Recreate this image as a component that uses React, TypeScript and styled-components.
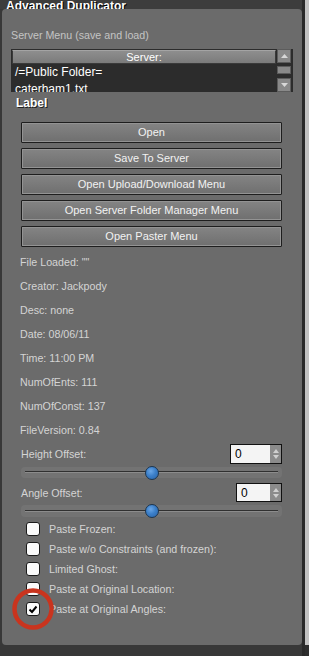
import React from 'react'
import styled, { createGlobalStyle } from 'styled-components'

const GlobalStyle = createGlobalStyle`
  html, body {
    margin: 0;
    padding: 0;
    background: #363636;
  }
  body {
    font-family: "Liberation Sans", Arial, sans-serif;
    font-size: 10.7px;
  }
  * {
    box-sizing: border-box;
  }
`

const Frame = styled.div`
  display: flex;
  width: 309px;
  height: 656px;
  overflow: hidden;
  background: #383838;
`

const Main = styled.div`
  width: 302px;
  display: flex;
  flex-direction: column;
`

const Edge = styled.div`
  width: 7px;
  border-left: 3px solid #2a2a2a;
  background: linear-gradient(to bottom, #c2c2c2 0, #c2c2c2 645px, #2e2e2e 645px);
`

const TitleBar = styled.div`
  height: 9px;
  padding-left: 6px;
  background: #3d3d3d;
  font-size: 12px;
  font-weight: bold;
  line-height: 12px;
  color: #ffffff;
  text-shadow: 1px 1px 0 #000, 0 1px 0 #000;
  white-space: nowrap;
`

const Panel = styled.div`
  margin-left: 2px;
  height: 636px;
  border-radius: 4px;
  background: #6b6b6b;
  display: flex;
  flex-direction: column;
`

const SectionLabel = styled.div`
  margin: 19px 0 0 9px;
  line-height: 14px;
  color: #c4c4c4;
`

const ListBox = styled.div`
  margin: 7px 0 0 9px;
  width: 282px;
  height: 43px;
  background: #2c2c2c;
  display: flex;
  overflow: hidden;
`

const ListMain = styled.div`
  flex: 1;
  display: flex;
  flex-direction: column;
  padding: 1px 0 0 1px;
`

const ListHeader = styled.div`
  width: 264px;
  height: 14px;
  line-height: 12px;
  text-align: center;
  color: #ffffff;
  font-size: 11px;
  border: 1px solid #3a3a3a;
  border-top-color: #a4a4a4;
  background: linear-gradient(to bottom, #8e8e8e, #7b7b7b);
`

const ListRow = styled.div`
  height: 17px;
  line-height: 17px;
  padding-left: 3px;
  color: #ffffff;
  font-size: 12px;
  white-space: nowrap;
`

const ScrollColumn = styled.div`
  width: 17px;
  padding-left: 1px;
  display: flex;
  flex-direction: column;
`

const ScrollBtn = styled.div<{ $h: number; $gap: number }>`
  width: 14px;
  height: ${(p) => p.$h}px;
  margin-top: ${(p) => p.$gap}px;
  background: #898989;
  border: 1px solid #5c5c5c;
  display: flex;
  align-items: center;
  justify-content: center;
`

const BoldLabel = styled.div`
  margin: 4px 0 0 14px;
  font-size: 12px;
  font-weight: bold;
  line-height: 14px;
  color: #ffffff;
  text-shadow: 1px 1px 0 #222;
`

const ButtonStack = styled.div`
  margin: 12px 0 0 19px;
  width: 261px;
  display: flex;
  flex-direction: column;
  gap: 5px;
`

const Button = styled.div`
  height: 21px;
  line-height: 19px;
  text-align: center;
  color: #f2f2f2;
  font-size: 11px;
  border: 1px solid #1e1e1e;
  border-radius: 1px;
  box-shadow: inset 0 0 0 1px #939393;
  background: linear-gradient(to bottom, #848484, #6f6f6f);
`

const InfoList = styled.div`
  margin: 3px 0 0 18px;
  display: flex;
  flex-direction: column;
`

const InfoLine = styled.div`
  line-height: 24px;
  color: #d4d4d4;
`

const OffsetRow = styled.div<{ $gap: number; $h: number }>`
  margin: ${(p) => p.$gap}px 0 0 19px;
  width: 261px;
  height: ${(p) => p.$h}px;
  display: flex;
  align-items: center;
  justify-content: space-between;
  color: #d4d4d4;
`

const NumBox = styled.div<{ $w: number }>`
  width: ${(p) => p.$w}px;
  height: 100%;
  border: 1px solid #111;
  background: #f4f4f4;
  display: flex;
`

const NumValue = styled.div`
  flex: 1;
  padding-left: 4px;
  color: #000;
  font-size: 12px;
  display: flex;
  align-items: center;
`

const Spinner = styled.div`
  width: 11px;
  background: #8b8b8b;
  display: flex;
  flex-direction: column;
  align-items: center;
  justify-content: center;
  gap: 2px;
`

const Track = styled.div<{ $h: number }>`
  margin: 3px 0 0 19px;
  width: 261px;
  height: ${(p) => p.$h}px;
  border-radius: 4px;
  background:
    linear-gradient(to bottom,
      transparent calc(50% - 1px), #303030 calc(50% - 1px),
      #303030 50%, #8c8c8c 50%, #8c8c8c calc(50% + 1px), transparent calc(50% + 1px))
      4px 0 / calc(100% - 8px) 100% no-repeat,
    #737373;
  display: flex;
  align-items: center;
`

const Thumb = styled.div`
  width: 14px;
  height: 14px;
  border-radius: 50%;
  border: 1px solid #1b3550;
  background: radial-gradient(circle at 40% 35%, #6aa6e6 0, #3b7fc9 45%, #2a64a8 100%);
`

const CheckList = styled.div`
  margin: 2px 0 0 24px;
  display: flex;
  flex-direction: column;
`

const CheckRow = styled.div`
  height: 20px;
  display: flex;
  align-items: center;
  gap: 9px;
  color: #d4d4d4;
`

const Box = styled.div`
  position: relative;
  width: 14px;
  height: 14px;
  border: 1px solid #1a1a1a;
  border-radius: 3px;
  background: #fafafa;
  display: flex;
  align-items: center;
  justify-content: center;
`

const Ring = styled.svg`
  position: absolute;
  left: 50%;
  top: 50%;
  width: 46px;
  height: 46px;
  transform: translate(-50%, -50%);
  pointer-events: none;
`

const Arrow = ({ up }: { up: boolean }) => (
  <svg width="7" height="4" viewBox="0 0 7 4">
    <polygon points={up ? '0,4 7,4 3.5,0' : '0,0 7,0 3.5,4'} fill="#d8d8d8" />
  </svg>
)

const SmallArrow = ({ up }: { up: boolean }) => (
  <svg width="6" height="4" viewBox="0 0 6 4">
    <polygon points={up ? '0,4 6,4 3,0' : '0,0 6,0 3,4'} fill="#d0d0d0" />
  </svg>
)

const info = [
  'File Loaded: ""',
  'Creator: Jackpody',
  'Desc: none',
  'Date: 08/06/11',
  'Time: 11:00 PM',
  'NumOfEnts: 111',
  'NumOfConst: 137',
  'FileVersion: 0.84',
]

const buttons = [
  'Open',
  'Save To Server',
  'Open Upload/Download Menu',
  'Open Server Folder Manager Menu',
  'Open Paster Menu',
]

const checks = [
  { label: 'Paste Frozen:', on: false },
  { label: 'Paste w/o Constraints (and frozen):', on: false },
  { label: 'Limited Ghost:', on: false },
  { label: 'Paste at Original Location:', on: false },
  { label: 'Paste at Original Angles:', on: true, marked: true },
]

const Slider = ({ value, h }: { value: number; h: number }) => {
  // value in -1..1, centre is 0
  const pct = ((value + 1) / 2) * 100
  return (
    <Track $h={h}>
      <Thumb style={{ marginLeft: `calc(${pct}% - 7px)` }} />
    </Track>
  )
}

export default function App() {
  return (
    <>
      <GlobalStyle />
      <Frame>
        <Main>
          <TitleBar>Advanced Duplicator</TitleBar>
          <Panel>
            <SectionLabel>Server Menu (save and load)</SectionLabel>
            <ListBox>
              <ListMain>
                <ListHeader>Server:</ListHeader>
                <ListRow>/=Public Folder=</ListRow>
                <ListRow>caterham1.txt</ListRow>
              </ListMain>
              <ScrollColumn>
                <ScrollBtn $h={14} $gap={0}>
                  <Arrow up />
                </ScrollBtn>
                <ScrollBtn $h={8} $gap={3} />
                <ScrollBtn $h={14} $gap={4}>
                  <Arrow up={false} />
                </ScrollBtn>
              </ScrollColumn>
            </ListBox>
            <BoldLabel>Label</BoldLabel>
            <ButtonStack>
              {buttons.map((b) => (
                <Button key={b}>{b}</Button>
              ))}
            </ButtonStack>
            <InfoList>
              {info.map((t) => (
                <InfoLine key={t}>{t}</InfoLine>
              ))}
            </InfoList>
            <OffsetRow $gap={2} $h={20}>
              <span>Height Offset:</span>
              <NumBox $w={52}>
                <NumValue>0</NumValue>
                <Spinner>
                  <SmallArrow up />
                  <SmallArrow up={false} />
                </Spinner>
              </NumBox>
            </OffsetRow>
            <Slider value={0} h={11} />
            <OffsetRow $gap={5} $h={19}>
              <span>Angle Offset:</span>
              <NumBox $w={46}>
                <NumValue>0</NumValue>
                <Spinner>
                  <SmallArrow up />
                  <SmallArrow up={false} />
                </Spinner>
              </NumBox>
            </OffsetRow>
            <Slider value={0} h={12} />
            <CheckList>
              {checks.map((c) => (
                <CheckRow key={c.label}>
                  <Box>
                    {c.on && (
                      <svg width="10" height="9" viewBox="0 0 10 9">
                        <path d="M1.5 4.5 L4 7 L8.5 1.5" fill="none" stroke="#000" strokeWidth="2" />
                      </svg>
                    )}
                    {c.marked && (
                      <Ring viewBox="0 0 46 46">
                        <circle cx="23" cy="23" r="18.5" fill="none" stroke="#c9341e" strokeWidth="4.5" />
                      </Ring>
                    )}
                  </Box>
                  <span>{c.label}</span>
                </CheckRow>
              ))}
            </CheckList>
          </Panel>
        </Main>
        <Edge />
      </Frame>
    </>
  )
}
